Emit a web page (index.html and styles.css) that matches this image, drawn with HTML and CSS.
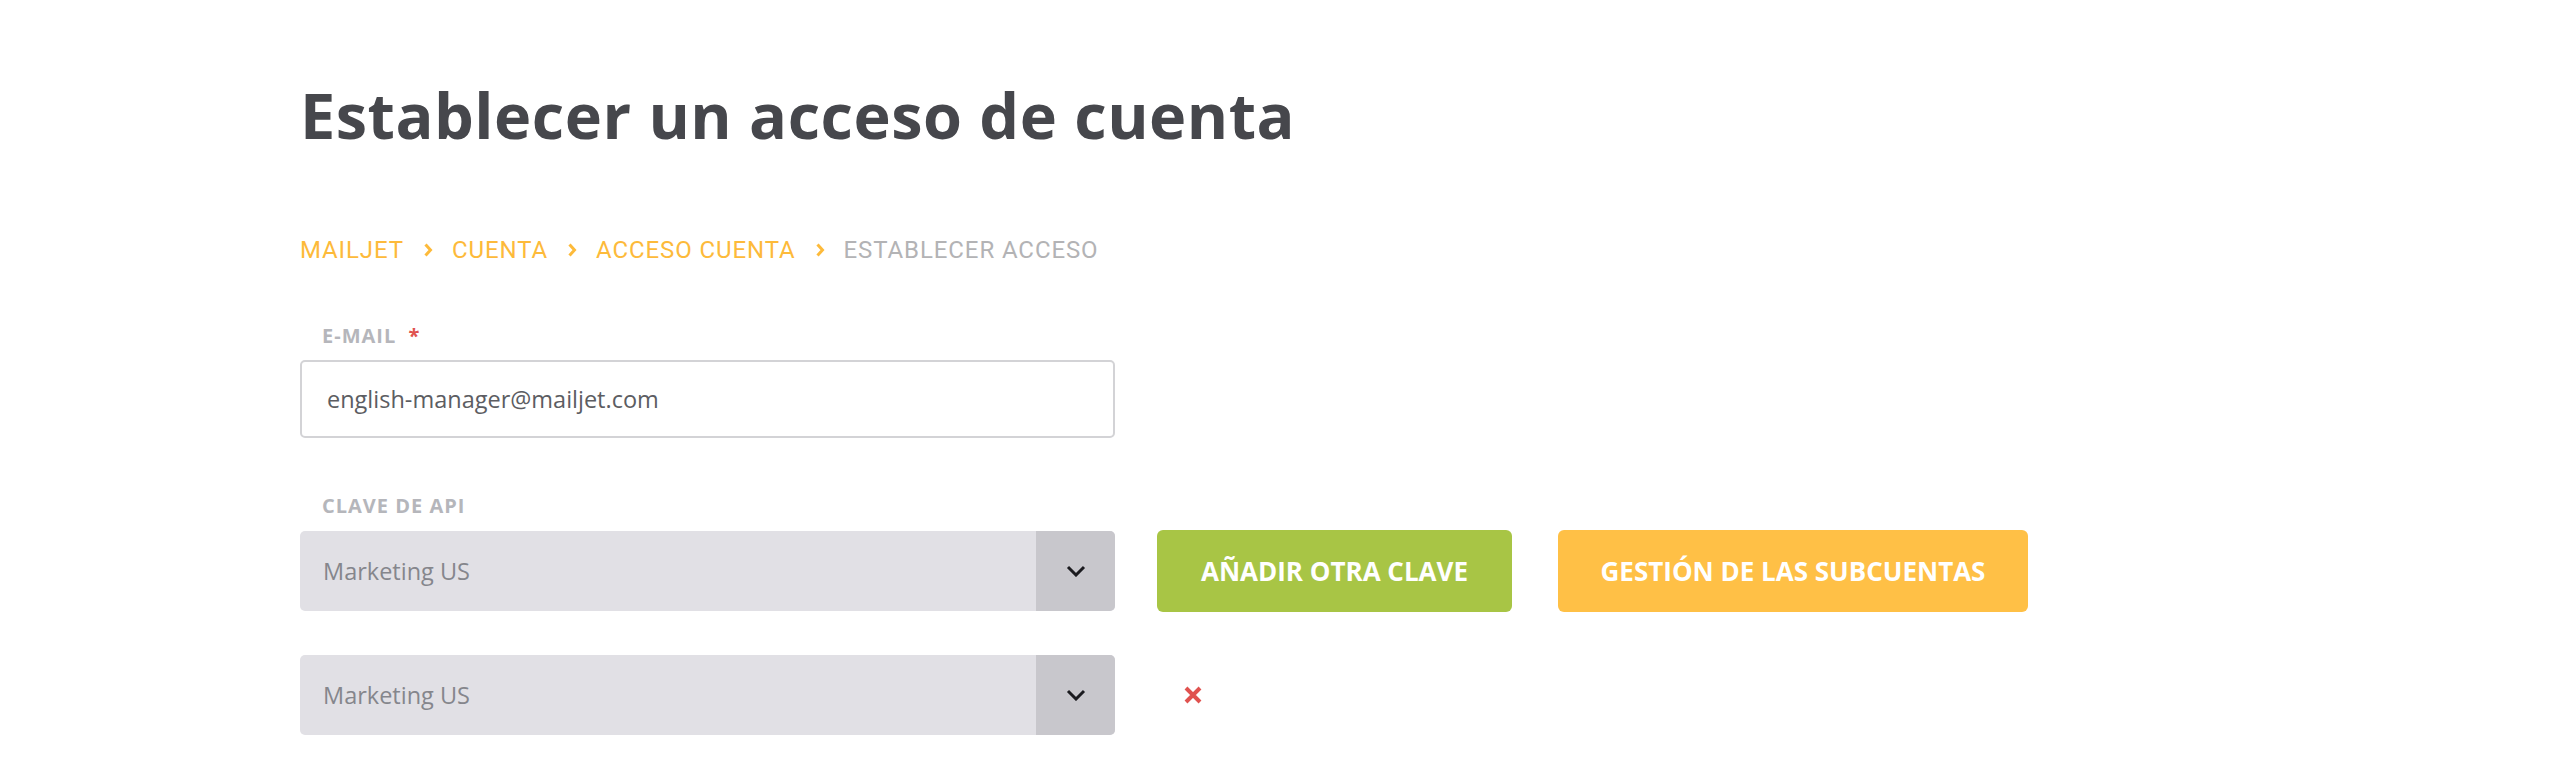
FILE: index.html
```html
<!DOCTYPE html>
<html lang="es">
<head>
<meta charset="utf-8">
<title>Establecer un acceso de cuenta</title>
<link rel="stylesheet" href="styles.css">
</head>
<body>
<main class="page">
  <h1 class="title">Establecer un acceso de cuenta</h1>
  <nav class="crumbs">
    <a class="crumb">MAILJET</a>
    <svg class="sep" viewBox="0 0 10 14" width="10" height="14"><path d="M2.5 1.5l5 5.5-5 5.5" fill="none" stroke="currentColor" stroke-width="3"/></svg>
    <a class="crumb">CUENTA</a>
    <svg class="sep" viewBox="0 0 10 14" width="10" height="14"><path d="M2.5 1.5l5 5.5-5 5.5" fill="none" stroke="currentColor" stroke-width="3"/></svg>
    <a class="crumb">ACCESO CUENTA</a>
    <svg class="sep" viewBox="0 0 10 14" width="10" height="14"><path d="M2.5 1.5l5 5.5-5 5.5" fill="none" stroke="currentColor" stroke-width="3"/></svg>
    <span class="crumb current">ESTABLECER ACCESO</span>
  </nav>

  <div class="field">
    <label class="label label-email">E-MAIL <span class="req">*</span></label>
    <div class="input">english-manager@mailjet.com</div>
  </div>

  <div class="field">
    <label class="label label-api">CLAVE DE API</label>
    <div class="row">
      <div class="select">
        <span class="select-text">Marketing US</span>
        <span class="select-arrow"><svg viewBox="0 0 20 12" width="20" height="12"><path d="M2 2l8 8 8-8" fill="none" stroke="#1b1b1f" stroke-width="3"/></svg></span>
      </div>
      <button class="btn btn-green">AÑADIR OTRA CLAVE</button>
      <button class="btn btn-orange">GESTIÓN DE LAS SUBCUENTAS</button>
    </div>
    <div class="row row2">
      <div class="select">
        <span class="select-text">Marketing US</span>
        <span class="select-arrow"><svg viewBox="0 0 20 12" width="20" height="12"><path d="M2 2l8 8 8-8" fill="none" stroke="#1b1b1f" stroke-width="3"/></svg></span>
      </div>
      <span class="remove"><svg viewBox="0 0 20 20" width="20" height="20"><path d="M3 3l14 14M17 3L3 17" fill="none" stroke="#e0524f" stroke-width="4"/></svg></span>
    </div>
  </div>
</main>
</body>
</html>
```

FILE: styles.css
```css
html, body {
  margin: 0;
  padding: 0;
  background: #ffffff;
}

.page {
  padding: 75px 0 0 300px;
  font-family: "Open Sans", "Noto Sans", sans-serif;
}

.title {
  margin: 0;
  font-size: 63px;
  line-height: 80px;
  font-weight: 700;
  color: #46474c;
  letter-spacing: 0.5px;
}

.crumbs {
  display: flex;
  align-items: center;
  gap: 19px;
  margin-top: 80px;
  height: 30px;
  font-family: Roboto, "Liberation Sans", sans-serif;
  font-size: 24px;
  font-weight: 400;
  color: #fdba3a;
}

.crumb {
  letter-spacing: 0.9px;
}

.crumb.current {
  color: #b3b3b5;
}

.sep {
  color: #fdba3a;
}

.field {
  display: flex;
  flex-direction: column;
}

.label {
  display: block;
  margin-left: 22px;
  height: 30px;
  font-size: 20px;
  font-weight: 700;
  color: #b5b6bb;
  letter-spacing: 1px;
}

.label-email {
  margin-top: 57px;
}

.label-api {
  margin-top: 54px;
}

.req {
  color: #e0524f;
  margin-left: 6px;
}

.input {
  box-sizing: border-box;
  width: 815px;
  height: 78px;
  margin-top: 8px;
  border: 2px solid #d3d3d6;
  border-radius: 5px;
  padding-left: 25px;
  display: flex;
  align-items: center;
  font-size: 23.5px;
  color: #5c5d62;
}

.row {
  display: flex;
  align-items: center;
  margin-top: 8px;
}

.row2 {
  margin-top: 43px;
}

.select {
  box-sizing: border-box;
  width: 815px;
  height: 80px;
  background: #e1e0e5;
  border-radius: 5px;
  display: flex;
  align-items: center;
  overflow: hidden;
}

.select-text {
  flex: 1;
  padding-left: 23px;
  font-size: 23.5px;
  color: #85868c;
}

.select-arrow {
  width: 79px;
  height: 100%;
  background: #c8c7cc;
  display: flex;
  align-items: center;
  justify-content: center;
}

.btn {
  height: 82px;
  border: 0;
  border-radius: 6px;
  font-family: "Open Sans", "Noto Sans", sans-serif;
  font-size: 26px;
  font-weight: 700;
  color: #ffffff;
  cursor: pointer;
}

.btn-green {
  margin-left: 42px;
  width: 355px;
  background: #a8c545;
}

.btn-orange {
  margin-left: 46px;
  width: 470px;
  background: #ffc046;
}

.remove {
  margin-left: 68px;
  display: flex;
}
```
